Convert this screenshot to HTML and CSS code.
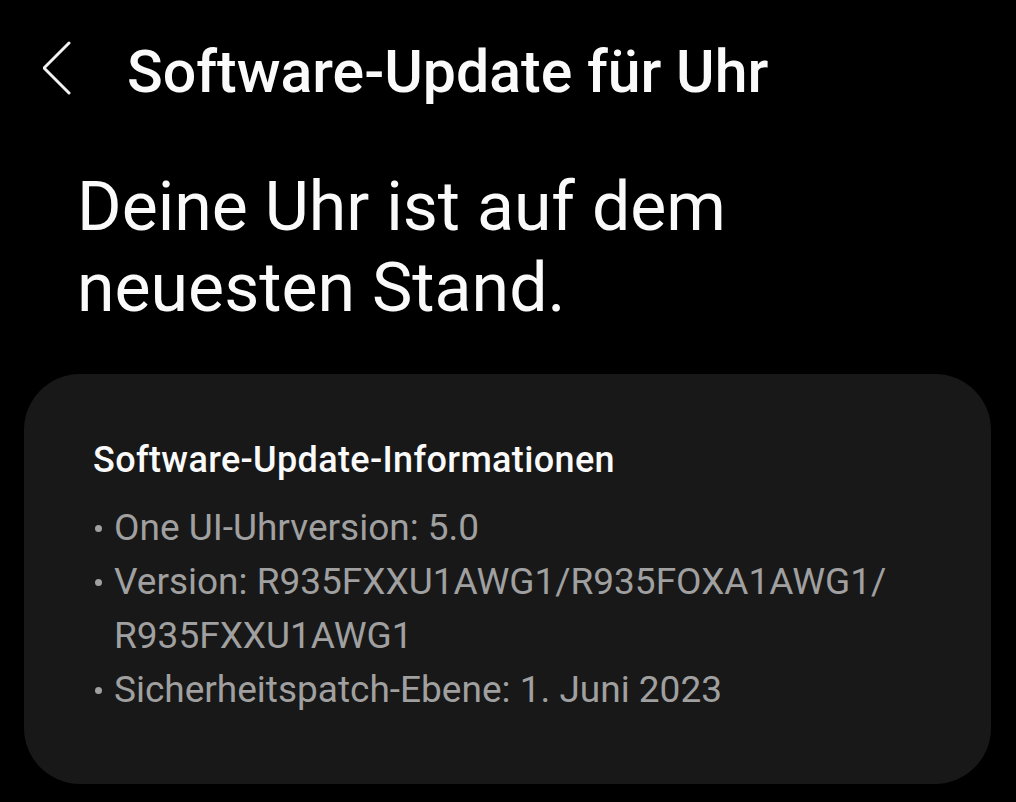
FILE: index.html
```html
<!DOCTYPE html>
<html lang="de">
<head>
  <meta charset="UTF-8">
  <meta name="viewport" content="width=device-width, initial-scale=1.0">
  <title>Software-Update für Uhr</title>
  <link rel="stylesheet" href="styles.css">
</head>
<body>
  <!-- Top bar -->
  <header class="top-bar">
    <svg class="back" viewBox="0 0 30 56" width="30" height="56" aria-hidden="true">
      <polyline points="26,2 1,27 26,52" fill="none" stroke="#f2f2f2" stroke-width="3" stroke-linecap="round" stroke-linejoin="round"/>
    </svg>
    <h1>Software-Update für Uhr</h1>
  </header>

  <p class="status">Deine Uhr ist auf dem<br>neuesten Stand.</p>

  <!-- Update info card -->
  <section class="card">
    <h2>Software-Update-Informationen</h2>
    <ul class="info">
      <li><span class="dot"></span><span>One UI-Uhrversion: 5.0</span></li>
      <li><span class="dot"></span><span>Version: R935FXXU1AWG1/R935FOXA1AWG1/<wbr>R935FXXU1AWG1</span></li>
      <li><span class="dot"></span><span>Sicherheitspatch-Ebene: 1. Juni 2023</span></li>
    </ul>
  </section>
</body>
</html>
```

FILE: styles.css
```css
body {
  margin: 0;
  background: #000;
  color: #fafafa;
  font-family: Roboto, 'Liberation Sans', sans-serif;
  height: 802px;
  overflow: hidden;
}
.top-bar {
  display: flex;
  align-items: center;
  padding: 37px 0 0 43px;
}
.back {
  display: block;
  margin-bottom: 6px;
  margin-right: 54px;
}
.top-bar h1 {
  margin: 0;
  font-size: 59px;
  font-weight: 500;
  line-height: 70px;
}
.status {
  margin: 60px 0 0 77px;
  font-size: 68px;
  line-height: 81px;
  font-weight: 400;
}
.card {
  margin: 45px 25px 0 24px;
  height: 410px;
  box-sizing: border-box;
  background: #181818;
  border-radius: 56px;
  padding: 66px 40px 0 69px;
}
.card h2 {
  margin: 0;
  font-size: 36px;
  font-weight: 500;
  letter-spacing: 0.35px;
  line-height: 40px;
}
.info {
  list-style: none;
  margin: 21px 0 0;
  padding: 0;
  color: #a0a0a0;
  font-size: 37px;
  line-height: 54px;
}
.info li {
  display: flex;
}
.dot {
  flex: none;
  width: 7px;
  height: 7px;
  margin: 24px 12px 0 2px;
  border-radius: 50%;
  background: #a0a0a0;
}
```
